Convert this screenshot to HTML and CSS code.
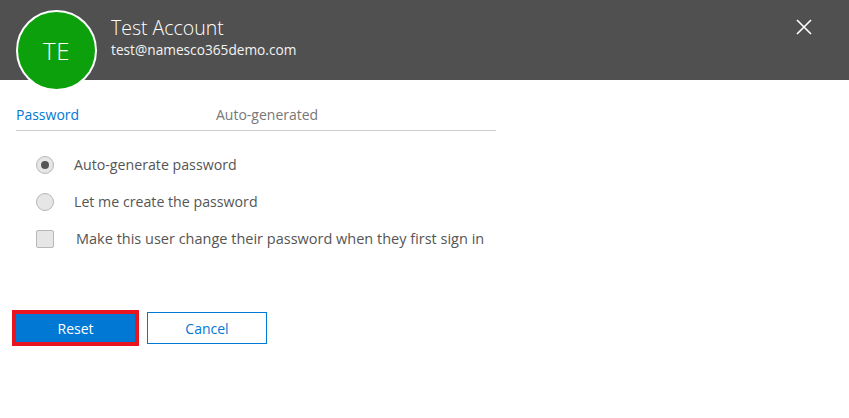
FILE: index.html
```html
<!DOCTYPE html>
<html>
<head>
<meta charset="utf-8">
<link rel="stylesheet" href="styles.css">
</head>
<body>
<div class="panel">
  <header class="header">
    <div class="avatar">TE</div>
    <div class="identity">
      <div class="name">Test Account</div>
      <div class="email">test@namesco365demo.com</div>
    </div>
    <button class="close" aria-label="Close">
      <svg width="16" height="16" viewBox="0 0 16 16"><path d="M1 1 L15 15 M15 1 L1 15" stroke="#ffffff" stroke-width="1.6" fill="none"/></svg>
    </button>
  </header>
  <div class="body">
    <div class="tabrow">
      <span class="tab-label">Password</span>
      <span class="tab-value">Auto-generated</span>
    </div>
    <div class="options">
      <label class="option"><span class="radio checked"></span><span>Auto-generate password</span></label>
      <label class="option"><span class="radio"></span><span>Let me create the password</span></label>
      <label class="option check-option"><span class="checkbox"></span><span>Make this user change their password when they first sign in</span></label>
    </div>
    <div class="actions">
      <div class="highlight"><button class="btn primary">Reset</button></div>
      <button class="btn secondary">Cancel</button>
    </div>
  </div>
</div>
</body>
</html>
```

FILE: styles.css
```css
* { box-sizing: border-box; }
html, body {
  margin: 0;
  padding: 0;
  background: #ffffff;
  font-family: "Open Sans", "Noto Sans", sans-serif;
}
.panel {
  width: 849px;
  height: 418px;
  position: relative;
}
.header {
  height: 80px;
  background: #505050;
  display: flex;
  align-items: flex-start;
  position: relative;
}
.avatar {
  position: absolute;
  left: 16px;
  top: 10px;
  width: 81px;
  height: 81px;
  border-radius: 50%;
  background: #0ca10c;
  border: 2px solid #ffffff;
  color: #ffffff;
  font-size: 24px;
  font-weight: 300;
  display: flex;
  align-items: center;
  justify-content: center;
  letter-spacing: 0.5px;
}
.identity {
  margin-left: 111px;
  padding-top: 15px;
  color: #ffffff;
}
.name {
  font-size: 19.5px;
  line-height: 25px;
  font-weight: 300;
}
.email {
  font-size: 13.7px;
  line-height: 20px;
  color: #f4f4f4;
}
.close {
  margin-left: auto;
  margin-right: 37px;
  margin-top: 19px;
  background: none;
  border: none;
  padding: 0;
  width: 16px;
  height: 16px;
  cursor: pointer;
}
.close svg { display: block; }
.body {
  padding: 25px 0 0 16px;
}
.tabrow {
  width: 480px;
  display: flex;
  border-bottom: 1px solid #cccccc;
  padding-bottom: 5px;
  font-size: 14px;
  line-height: 20px;
}
.tab-label {
  color: #0078d4;
  width: 200px;
}
.tab-value {
  color: #777777;
}
.options {
  display: flex;
  flex-direction: column;
  padding-left: 20px;
  padding-top: 24px;
  gap: 17px;
}
.option {
  display: flex;
  align-items: center;
  font-size: 14.2px;
  line-height: 20px;
  color: #555555;
  gap: 20px;
}
.check-option { gap: 22px; font-size: 14.5px; }
.radio {
  width: 18px;
  height: 18px;
  border-radius: 50%;
  border: 1px solid #b8b8b8;
  background: #e6e6e6;
  display: flex;
  align-items: center;
  justify-content: center;
  flex: none;
}
.radio.checked::after {
  content: "";
  width: 8px;
  height: 8px;
  border-radius: 50%;
  background: #555555;
}
.checkbox {
  width: 18px;
  height: 18px;
  border: 1px solid #b8b8b8;
  border-radius: 2px;
  background: #e6e6e6;
  flex: none;
}
.actions {
  display: flex;
  align-items: center;
  margin-top: 61px;
  margin-left: -4px;
  gap: 8px;
}
.highlight {
  border: 4px solid #e8141f;
  display: flex;
}
.btn {
  font-family: inherit;
  font-size: 14px;
  height: 28px;
  width: 119px;
  padding: 0;
  cursor: pointer;
}
.primary {
  background: #0078d4;
  color: #ffffff;
  border: none;
}
.secondary {
  background: #ffffff;
  color: #0078d4;
  border: 1px solid #0078d4;
  height: 32px;
  width: 120px;
}
```
